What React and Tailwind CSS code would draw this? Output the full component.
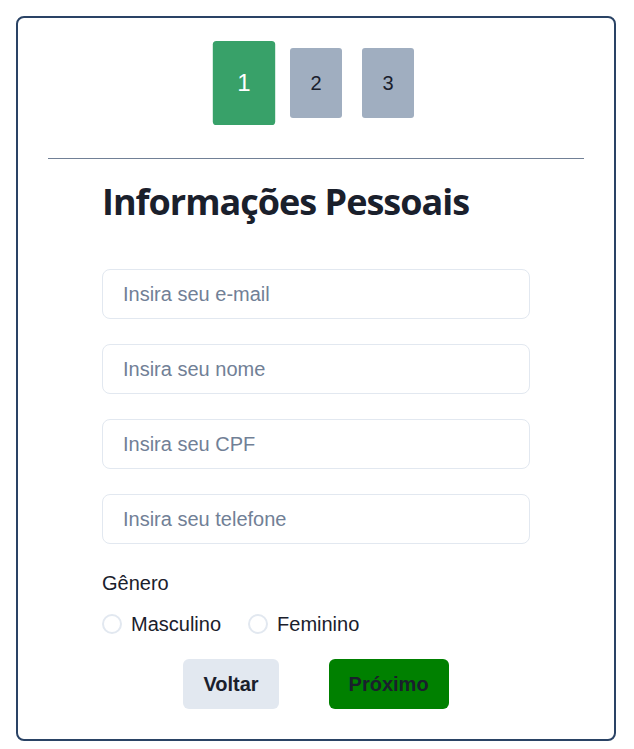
import React, { useState } from "react";

const etapas = [1, 2, 3];

const campos = [
  { tipo: "email", placeholder: "Insira seu e-mail" },
  { tipo: "text", placeholder: "Insira seu nome" },
  { tipo: "text", placeholder: "Insira seu CPF" },
  { tipo: "tel", placeholder: "Insira seu telefone" },
];

const App = () => {
  const [etapa] = useState(1);
  const [genero, setGenero] = useState("");

  return (
    <div className="m-4 w-[600px] rounded-lg border-2 border-[#2a4365] bg-white p-[30px] font-['Liberation_Sans',Arial,sans-serif] text-[#1a202c]">
      {/* Etapas */}
      <div className="flex justify-center gap-5">
        {etapas.map((n) => (
          <div
            key={n}
            className={
              n === etapa
                ? "flex h-[70px] w-[52px] scale-[1.2] items-center justify-center rounded-[3px] bg-[#38a169] text-xl text-white"
                : "flex h-[70px] w-[52px] items-center justify-center rounded-[3px] bg-[#a0aec0] text-xl text-[#1a202c]"
            }
          >
            {n}
          </div>
        ))}
      </div>

      <hr className="mt-10 border-t border-[#718096]" />

      {/* Formulário */}
      <div className="mx-auto w-[428px]">
        <h2 className="mt-[23px] font-['Open_Sans',sans-serif] text-4xl font-bold tracking-[-1px] text-[#1a202c]">
          Informações Pessoais
        </h2>

        <div className="mt-[47px] flex flex-col gap-[25px]">
          {campos.map((c) => (
            <input
              key={c.placeholder}
              type={c.tipo}
              placeholder={c.placeholder}
              className="h-[50px] w-full rounded-lg border border-[#e2e8f0] px-5 text-xl outline-none placeholder:text-[#718096]"
            />
          ))}
        </div>

        <p className="mt-[25px] text-xl leading-7">Gênero</p>
        <div className="mt-[13px] flex items-center text-xl leading-7">
          <label className="mr-[27px] flex items-center gap-[9px]">
            <input
              type="radio"
              name="genero"
              checked={genero === "M"}
              onChange={() => setGenero("M")}
              className="h-5 w-5 appearance-none rounded-full border-2 border-[#e2e8f0]"
            />
            Masculino
          </label>
          <label className="flex items-center gap-[9px]">
            <input
              type="radio"
              name="genero"
              checked={genero === "F"}
              onChange={() => setGenero("F")}
              className="h-5 w-5 appearance-none rounded-full border-2 border-[#e2e8f0]"
            />
            Feminino
          </label>
        </div>

        <div className="mt-[21px] flex justify-center gap-[50px]">
          <button className="h-[50px] rounded-md bg-[#e2e8f0] px-5 text-xl font-bold text-[#1a202c]">
            Voltar
          </button>
          <button className="h-[50px] rounded-md bg-[#008000] px-5 text-xl font-bold text-[#1a202c]">
            Próximo
          </button>
        </div>
      </div>
    </div>
  );
};

export default App;
